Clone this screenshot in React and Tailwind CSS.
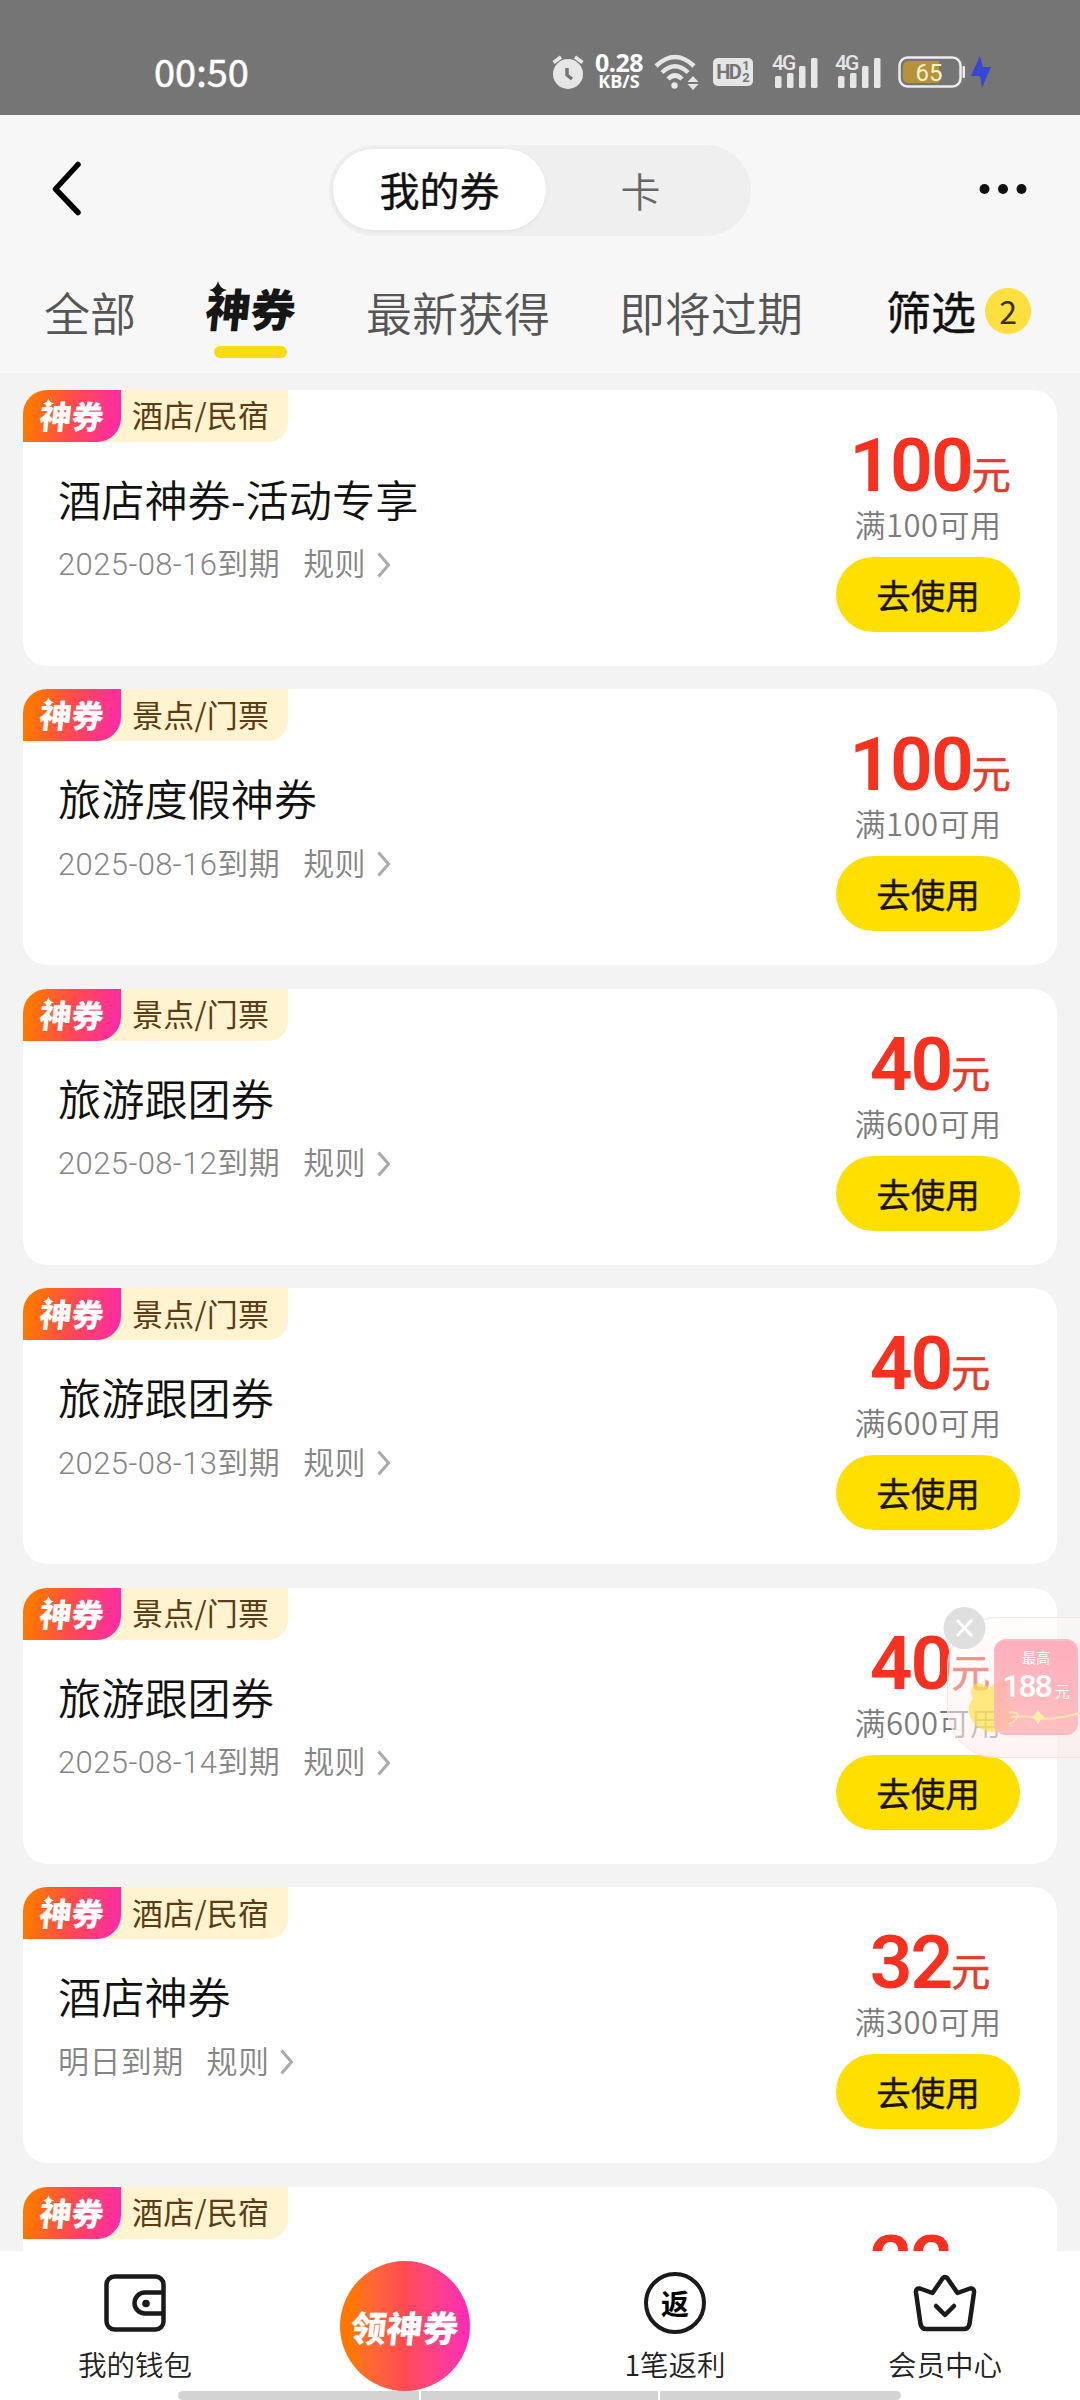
import clsx from 'clsx';

const coupons = [
  { tag: '酒店/民宿', title: '酒店神券-活动专享', date: '2025-08-16到期', amount: '100', limit: '满100可用' },
  { tag: '景点/门票', title: '旅游度假神券', date: '2025-08-16到期', amount: '100', limit: '满100可用' },
  { tag: '景点/门票', title: '旅游跟团券', date: '2025-08-12到期', amount: '40', limit: '满600可用' },
  { tag: '景点/门票', title: '旅游跟团券', date: '2025-08-13到期', amount: '40', limit: '满600可用' },
  { tag: '景点/门票', title: '旅游跟团券', date: '2025-08-14到期', amount: '40', limit: '满600可用' },
  { tag: '酒店/民宿', title: '酒店神券', date: '明日到期', amount: '32', limit: '满300可用' },
  { tag: '酒店/民宿', amount: '22' },
];

const Signal = () => (
  <div className="relative w-[48px] h-[36px]">
    <svg className="w-full h-full" viewBox="0 0 48 36" fill="#e6e6e6">
      <rect x="3" y="22" width="6.5" height="12" rx="1.5" />
      <rect x="15" y="19" width="6.5" height="15" rx="1.5" />
      <rect x="27" y="12" width="6.5" height="22" rx="1.5" />
      <rect x="39" y="4" width="6.5" height="30" rx="1.5" />
    </svg>
    <span className="absolute left-0 top-[-1px] text-[21px] leading-[20px] font-medium text-[#e6e6e6] font-['Roboto',sans-serif] tracking-[-2px]">4G</span>
  </div>
);

const StatusBar = () => (
  <div className="h-[115px] shrink-0 bg-[#757575] flex items-center pt-[28px] pl-[154px] text-white">
    <span className="text-[38px] leading-none w-[398px] mt-[-2px] font-['Noto_Sans_CJK_SC',sans-serif] [-webkit-text-stroke:0.5px]">00:50</span>
    <svg className="w-[32px] h-[36px]" viewBox="0 0 32 36">
      <circle cx="16" cy="20" r="15" fill="#e6e6e6" />
      <path d="M1.500 8.500 9 3M30.500 8.500 23 3" stroke="#e6e6e6" strokeWidth="3.500" />
      <path d="M15 14v7l5 4" fill="none" stroke="#757575" strokeWidth="3.500" />
    </svg>
    <div className="ml-[8px] w-[54px] text-center text-white font-['Open_Sans',sans-serif]">
      <div className="text-[25px] leading-[19px] font-bold tracking-[-0.5px]">0.28</div>
      <div className="text-[18px] leading-[19px] font-bold">KB/S</div>
    </div>
    <svg className="ml-[8px] w-[46px] h-[36px]" viewBox="0 0 46 36" fill="none" stroke="#e6e6e6" strokeWidth="4.500">
      <path d="M2 12Q21 -6 40 12M8 18.500Q21 6 34 18.500M14 25Q21 18 28 25" />
      <circle cx="20.500" cy="31.500" r="3.200" fill="#e6e6e6" stroke="none" />
      <path d="M39 22l5.500 6h-11zM39 36l5.500-6h-11z" fill="#e6e6e6" stroke="none" />
    </svg>
    <div className="ml-[13px] w-[40px] h-[28px] rounded-[5px] bg-[#e6e6e6] text-[#757575] flex items-center justify-center font-bold font-['Roboto',sans-serif]">
      <span className="text-[20px] tracking-[-1.500px] leading-none">HD</span>
      <span className="ml-[2px] flex flex-col text-[13px] leading-[12px]">
        <span>1</span>
        <span>2</span>
      </span>
    </div>
    <div className="ml-[19px] flex gap-[15px]">
      <Signal />
      <Signal />
    </div>
    <svg className="ml-[15px] w-[68px] h-[34px]" viewBox="0 0 68 34">
      <rect x="1.500" y="2.500" width="61" height="29" rx="8" fill="none" stroke="#ececec" strokeWidth="2.500" />
      <path d="M10 6h31v22H10a5 5 0 0 1-5-5V11a5 5 0 0 1 5-5z" fill="#b8923a" />
      <rect x="64.500" y="11" width="2.500" height="12" rx="1" fill="#ececec" />
      <text x="31" y="25.500" textAnchor="middle" fontSize="24" fill="#fff3d0" fontFamily="Roboto">65</text>
    </svg>
    <svg className="ml-[5px] w-[20px] h-[32px]" viewBox="0 0 20 32" fill="#3a46d8">
      <path d="M9 0 0 20h9l2 12 9-21h-8z" />
    </svg>
  </div>
);

const Header = () => (
  <div className="h-[146px] flex items-center justify-between pl-[52px] pr-[53px]">
    <svg className="w-[30px] h-[56px]" viewBox="0 0 30 56" fill="none" stroke="#000" strokeWidth="5.500" strokeLinecap="round" strokeLinejoin="round">
      <path d="M26 4.500 3.500 29 26 52.500" />
    </svg>
    <div className="w-[422px] h-[91px] ml-[19px] mt-[4px] rounded-full bg-[#efefef] p-[4px] flex text-[40px]">
      <div className="w-[213px] h-[81px] rounded-full bg-white shadow-[0_1px_4px_rgba(0,0,0,0.06)] flex items-center justify-center text-[#111] [-webkit-text-stroke:0.4px]">我的券</div>
      <div className="flex-1 h-[83px] flex items-center justify-center text-[#666] font-[350] pr-[12px]">卡</div>
    </div>
    <svg className="w-[48px] h-[12px] mt-[2px]" viewBox="0 0 48 12" fill="#111">
      <circle cx="5.500" cy="6" r="5" />
      <circle cx="24" cy="6" r="5" />
      <circle cx="42.500" cy="6" r="5" />
    </svg>
  </div>
);

const Tabs = () => (
  <div className="h-[112px] flex items-start pl-[44px] pt-[15px] text-[46px] leading-[70px] text-[#555]">
    <span className="w-[162px] font-[350]">全部</span>
    <div className="relative w-[160px] text-[#161616]">
      <span className="block w-[92px] mt-[-3px] text-[45px] font-black -skew-x-6">神券</span>
      <svg className="absolute left-[3px] top-[5px] w-[18px] h-[18px]" viewBox="0 0 18 18" fill="#161616">
        <path d="M9 0q1.500 7.500 9 9-7.500 1.500-9 9-1.500-7.500-9-9 7.500-1.500 9-9z" />
      </svg>
      <div className="ml-[8px] mt-[3px] w-[73px] h-[12px] rounded-full bg-[#fbdc12]" />
    </div>
    <span className="w-[253px] font-[350]">最新获得</span>
    <span className="w-[267px] font-[350]">即将过期</span>
    <span className="text-[45px] text-[#111] [-webkit-text-stroke:0.4px]">筛选</span>
    <span className="ml-[9px] mt-[12px] w-[46px] h-[46px] shrink-0 rounded-full bg-[#fddf3f] flex items-center justify-center text-[32px] leading-none text-[#3c3200] pb-[2px]">2</span>
  </div>
);

const CouponCard = ({ coupon }) => (
  <div className="h-[276px] shrink-0 rounded-[24px] bg-white overflow-hidden flex justify-between">
    <div>
      <div className="w-[265px] h-[52px] rounded-br-[20px] bg-[#fff4cf] flex items-center">
        <div className="relative w-[98px] h-[52px] rounded-br-[24px] bg-linear-[100deg] from-[#ff7700] from-10% via-[#ff4a50] to-[#fd28b0] flex items-center justify-center text-white">
          <span className="text-[32px] leading-none font-black -skew-x-6 mt-[-2px]">神券</span>
          <svg className="absolute left-[20px] top-[8px] w-[11px] h-[11px]" viewBox="0 0 18 18" fill="#fff">
            <path d="M9 0q1.500 7.500 9 9-7.500 1.500-9 9-1.500-7.500-9-9 7.500-1.500 9-9z" />
          </svg>
        </div>
        <span className="ml-[11px] mt-[-4px] text-[31px] leading-none tracking-[0.2px] text-[#5c3c14]">{coupon.tag}</span>
      </div>
      {coupon.title && (
        <>
          <div className="pl-[35px] mt-[31px] text-[43.200px] leading-[50px] font-[350] text-[#111]">{coupon.title}</div>
          <div className="pl-[35px] mt-[22px] h-[40px] flex items-center text-[31px] leading-none font-[350] text-[#858585] font-['Roboto','Noto_Sans_CJK_SC',sans-serif] tracking-[0.4px]">
            <span>{coupon.date}</span>
            <span className="ml-[23px]">规则</span>
            <svg className="ml-[11px] w-[14px] h-[26px]" viewBox="0 0 14 26" fill="none" stroke="#aaa" strokeWidth="3">
              <path d="m1.500 1.500 10 11.500-10 11.500" />
            </svg>
          </div>
        </>
      )}
    </div>
    <div className="w-[184px] mr-[37px] pt-[40px] flex flex-col items-center">
      <div className="h-[70px] pl-[4px] flex items-baseline text-[#f8301f] font-['Roboto','Noto_Sans_CJK_SC',sans-serif]">
        <span className="text-[75px] leading-[70px] font-semibold tracking-[-2px]">{coupon.amount}</span>
        <span className="text-[39px] leading-none text-[#e23c2c] [-webkit-text-stroke:0.6px] relative top-[-2px]">元</span>
      </div>
      {coupon.limit && (
        <>
          <div className="h-[57px] pt-[7px] text-[31px] leading-[34px] tracking-[0.5px] font-[350] text-[#7c7c7c]">{coupon.limit}</div>
          <button className="w-[184px] h-[75px] shrink-0 rounded-full bg-[#ffdf00] text-[34.500px] leading-none text-[#1c1200] [-webkit-text-stroke:0.4px]">去使用</button>
        </>
      )}
    </div>
  </div>
);

const FloatingPromo = () => (
  <div className="absolute left-[943px] top-[1606px] w-[137px] h-[152px]">
    <div className="absolute left-[4px] top-[11px] w-[133px] h-[141px] rounded-l-[50px] border border-r-0 border-[#fbe2e2] bg-linear-to-b from-[#fffafa]/40 to-[#ffecec]/60" />
    <svg className="absolute left-[24px] top-[72px] w-[50px] h-[56px]" viewBox="0 0 50 56" fill="#ffe14d" fillOpacity="0.7">
      <path d="M8 6q8-2 14 5Q30 0 38 4q4 6 0 18 10 9 8 20-6 12-22 12Q8 52 3 38-1 28 6 21 1 12 8 6z" />
    </svg>
    <div className="absolute left-[51px] top-[33px] w-[84px] h-[96px] rounded-[12px] border-2 border-[#fdb9c6]/70 bg-linear-to-b from-[#fda5b5]/90 to-[#ffb3b3]/80 text-white text-center">
      <div className="pt-[8px] text-[14px] leading-[16px]">最高</div>
      <div className="mt-[4px] flex items-baseline justify-center font-['Roboto','Noto_Sans_CJK_SC',sans-serif]">
        <span className="text-[32px] leading-[34px] font-medium tracking-[-2px]">188</span>
        <span className="ml-[4px] text-[15px]">元</span>
      </div>
    </div>
    <svg className="absolute left-[64px] top-[98px] w-[73px] h-[26px]" viewBox="0 0 73 26" fill="none" stroke="#ffe3b0" strokeWidth="2">
      <path d="M2 8q12 0 8 6t-8 5M4 13q14-2 27 1t42-5" />
      <path d="M31 5q2 6 7 8-5 2-7 8-2-6-7-8 5-2 7-8z" fill="#fff0a8" stroke="none" />
    </svg>
    <svg className="absolute left-0 top-0 w-[43px] h-[43px]" viewBox="0 0 43 43">
      <circle cx="21.500" cy="22" r="21" fill="#d9d9d9" fillOpacity="0.85" />
      <path d="m14 14 15 16M29 14 14 30" stroke="#fff" strokeWidth="3" />
    </svg>
  </div>
);

const WalletIcon = () => (
  <svg className="w-[62px] h-[58px]" viewBox="0 0 62 58" fill="none" stroke="#1a1a1a" strokeWidth="4.500">
    <rect x="2.500" y="2.500" width="57" height="53" rx="8" />
    <path d="M59 18.500H41a10.500 10.500 0 0 0 0 21h18" />
    <circle cx="42" cy="29.500" r="3.800" fill="#1a1a1a" stroke="none" />
  </svg>
);

const CrownIcon = () => (
  <svg className="w-[64px] h-[58px]" viewBox="0 0 64 58" fill="none" stroke="#1a1a1a" strokeWidth="4.500" strokeLinejoin="round" strokeLinecap="round">
    <path d="M29.500 4.500q2.500-3 5 0L44.500 19 57 14.500q4.500-.5 4 4L56.500 50q-1 5-6 5h-37q-5 0-6-5L3 18.500q-.5-4.500 4-4L19.500 19z" />
    <path d="m23 32 9 9 9-9" />
  </svg>
);

const RebateIcon = () => (
  <div className="w-[62px] h-[62px] rounded-full border-[4.500px] border-[#1a1a1a] flex items-center justify-center text-[28px] leading-none font-bold text-black">返</div>
);

const NavItem = ({ label, children }) => (
  <div className="w-[270px] flex flex-col items-center">
    <div className="h-[103px] flex items-center justify-center">{children}</div>
    <span className="text-[28.500px] leading-[20px] font-[350] text-[#222]">{label}</span>
  </div>
);

const BottomNav = () => (
  <div className="relative h-[149px] shrink-0 bg-white">
    <div className="flex">
      <NavItem label="我的钱包"><WalletIcon /></NavItem>
      <div className="w-[270px] pt-[10px] flex justify-center">
        <div className="w-[130px] h-[130px] rounded-full bg-linear-to-r from-[#ff7600] from-10% via-[#ff4a52] to-[#fd28b8] flex items-center justify-center text-white">
          <span className="text-[36px] leading-none font-black -skew-x-6 whitespace-nowrap">领神券</span>
        </div>
      </div>
      <NavItem label="1笔返利"><RebateIcon /></NavItem>
      <NavItem label="会员中心"><CrownIcon /></NavItem>
    </div>
    <div className="absolute left-[178px] bottom-0 w-[723px] h-[9px] flex gap-[2px]">
      {['w-[241px] rounded-l-full', 'w-[237px]', 'w-[241px] rounded-r-full'].map((c, i) => (
        <div key={i} className={clsx('h-full bg-[#d3d3d3]', c)} />
      ))}
    </div>
  </div>
);

const App = () => {
  return (
    <div className="relative w-[1080px] h-[2400px] overflow-hidden flex flex-col bg-[#f3f3f3] font-['Noto_Sans_CJK_SC',sans-serif]">
      <StatusBar />
      <div className="h-[258px] shrink-0 bg-[#f7f7f7]">
        <Header />
        <Tabs />
      </div>
      <div className="flex-1 min-h-0 overflow-hidden pt-[16.500px] px-[23px] flex flex-col gap-[23.500px]">
        {coupons.map((coupon, i) => (
          <CouponCard key={i} coupon={coupon} />
        ))}
      </div>
      <FloatingPromo />
      <BottomNav />
    </div>
  );
};

export default App;
